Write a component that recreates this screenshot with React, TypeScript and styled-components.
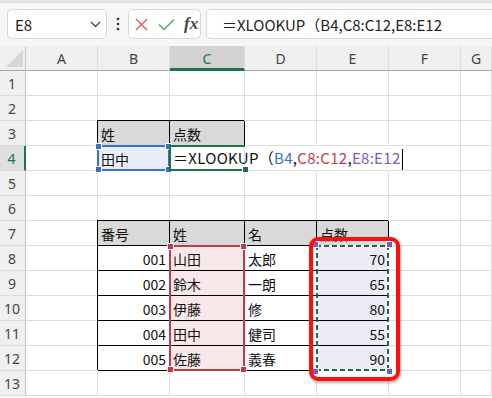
import React, { FC, ReactNode } from 'react';
import styled, { createGlobalStyle, css } from 'styled-components';

const GlobalStyle = createGlobalStyle`
  html, body {
    margin: 0;
    padding: 0;
    background: #fff;
    overflow: hidden;
  }
  body {
    font-family: "Noto Sans CJK JP", "Noto Sans", sans-serif;
  }
`;

const GREEN = '#1f7244';
const GRID = '#dcdcdc';

const Page = styled.div`
  width: 492px;
  height: 398px;
  overflow: hidden;
  display: flex;
  flex-direction: column;
  background: #fff;
`;

/* ---------- formula bar ---------- */

const FormulaBar = styled.div`
  flex: none;
  height: 46px;
  box-sizing: border-box;
  display: flex;
  align-items: flex-start;
  padding: 6px 0 0 7px;
  background: #f6f6f6;
  border-top: 3px solid #e3e3e3;
`;

const Box = styled.div`
  height: 30px;
  box-sizing: border-box;
  display: flex;
  align-items: center;
  background: #fff;
  border: 1px solid #d6d6d6;
  border-radius: 5px;
`;

const NameBox = styled(Box)`
  width: 100px;
  justify-content: space-between;
  padding: 0 5px 0 7px;
  font-size: 15px;
  color: #222;
`;

const Dots = styled.div`
  width: 21px;
  height: 30px;
  display: flex;
  align-items: center;
  justify-content: center;
`;

const FxBox = styled(Box)`
  width: 73px;
  padding-left: 6px;
  gap: 10px;
`;

const FxLabel = styled.span`
  font-family: "Liberation Serif", "DejaVu Serif", serif;
  font-style: italic;
  font-weight: bold;
  font-size: 17px;
  color: #444;
  margin-left: -1px;
`;

const FormulaBox = styled(Box)`
  flex: 1;
  margin: 0 -12px 0 5px;
  padding-left: 15px;
  font-size: 15px;
  color: #222;
  white-space: nowrap;
`;

/* ---------- sheet ---------- */

const Sheet = styled.div`
  flex: 1;
  display: grid;
  grid-template-columns: 26px 72px 72px 75px 72px 72px 72px 1fr;
  grid-template-rows: repeat(15, 25px);
  background: #fff;
  font-family: "Noto Sans", "Open Sans", sans-serif;
`;

const Corner = styled.div`
  grid-row: 1;
  grid-column: 1;
  box-sizing: border-box;
  background: #f0f0f0;
  border-right: 1px solid #c6c6c6;
  border-bottom: 1px solid #a8a8a8;
  display: flex;
  align-items: flex-end;
  justify-content: flex-end;
  padding: 0 2px 3px 0;
`;

const ColHead = styled.div<{ $c: number; $active?: boolean }>`
  grid-row: 1;
  grid-column: ${(p) => p.$c + 1};
  box-sizing: border-box;
  display: flex;
  align-items: center;
  justify-content: center;
  font-size: 14px;
  color: #444;
  background: #f0f0f0;
  border-right: 1px solid ${GRID};
  border-bottom: 1px solid #a8a8a8;
  ${(p) =>
    p.$active &&
    css`
      background: #d3d3d3;
      color: ${GREEN};
      border-bottom: 3px solid ${GREEN};
      padding-top: 2px;
    `}
`;

const RowHead = styled.div<{ $r: number; $active?: boolean }>`
  grid-row: ${(p) => p.$r + 1};
  grid-column: 1;
  box-sizing: border-box;
  display: flex;
  align-items: center;
  justify-content: center;
  padding-right: 1px;
  font-size: 14px;
  color: #444;
  background: #f0f0f0;
  border-right: 1px solid #c6c6c6;
  border-bottom: 1px solid ${GRID};
  ${(p) =>
    p.$active &&
    css`
      background: #dfdfdf;
      color: ${GREEN};
      border-right: 2px solid ${GREEN};
    `}
`;

const Cell = styled.div<{
  $r: number;
  $c: number;
  $head?: boolean;
  $boxed?: boolean;
  $right?: boolean;
  $bg?: string;
  $spill?: boolean;
}>`
  grid-row: ${(p) => p.$r + 1};
  grid-column: ${(p) => p.$c + 1};
  min-width: 0;
  box-sizing: border-box;
  display: flex;
  align-items: center;
  justify-content: ${(p) => (p.$right ? 'flex-end' : 'flex-start')};
  padding: 1px 3px 0 3px;
  font-family: "Noto Sans CJK JP", sans-serif;
  font-size: 14px;
  color: #111;
  white-space: nowrap;
  background: ${(p) => p.$bg ?? 'transparent'};
  border-right: 1px solid ${(p) => (p.$spill ? 'transparent' : GRID)};
  border-bottom: 1px solid ${GRID};
  ${(p) =>
    (p.$boxed || p.$head) &&
    css`
      border-right-color: #000;
      border-bottom-color: #000;
      box-shadow: -1px -1px 0 #000;
    `}
  ${(p) =>
    p.$head &&
    css`
      background: #d9d9d9;
    `}
`;

const FormulaText = styled.span`
  font-size: 15px;
  letter-spacing: 0.3px;
`;

const Tok = styled.span<{ $color?: string }>`
  color: ${(p) => p.$color ?? '#111'};
`;

const Caret = styled.span`
  display: inline-block;
  width: 1px;
  height: 21px;
  margin-left: 1px;
  background: #000;
  vertical-align: middle;
`;

/* ---------- overlays on the grid ---------- */

const Overlay = styled.div<{ $r: number; $c: number; $span?: number }>`
  grid-row: ${(p) => p.$r + 1} / span ${(p) => p.$span ?? 1};
  grid-column: ${(p) => p.$c + 1};
  position: relative;
  z-index: 2;
  pointer-events: none;
  box-sizing: border-box;
  margin: -1px 0 0 -1px;
`;

const RangeBox = styled(Overlay)<{ $color: string }>`
  border: 2px solid ${(p) => p.$color};
`;

const ActiveBox = styled(Overlay)`
  border-top: 2px solid ${GREEN};
  border-left: 2px solid ${GREEN};
  border-bottom: 2px solid ${GREEN};
`;

const dash = (dir: string) =>
  `repeating-linear-gradient(${dir}, #1e6a3f 0 5px, #fff 5px 8px)`;

const CopyBox = styled(Overlay)`
  background: ${dash('90deg')} top / 100% 2px no-repeat,
    ${dash('90deg')} bottom / 100% 2px no-repeat,
    ${dash('180deg')} left / 2px 100% no-repeat,
    ${dash('180deg')} right / 2px 100% no-repeat;
`;

const Callout = styled(Overlay)`
  z-index: 3;
  margin: -9px -11px -10px -8px;
  border: 4px solid #ff0e0e;
  border-radius: 9px;
  box-shadow: 1px 2px 3px rgba(0, 0, 0, 0.3);
`;

type CornerPos = 'tl' | 'tr' | 'bl' | 'br';

const Handle = styled.span<{ $color: string; $at: CornerPos }>`
  position: absolute;
  width: 7px;
  height: 7px;
  box-sizing: border-box;
  background: ${(p) => p.$color};
  border: 1px solid #fff;
  ${(p) => (p.$at[0] === 't' ? 'top: -4px;' : 'bottom: -4px;')}
  ${(p) => (p.$at[1] === 'l' ? 'left: -4px;' : 'right: -4px;')}
`;

const Handles: FC<{ color: string; corners?: CornerPos[] }> = ({
  color,
  corners = ['tl', 'tr', 'bl', 'br'],
}) => (
  <>
    {corners.map((c) => (
      <Handle key={c} $color={color} $at={c} />
    ))}
  </>
);

/* ---------- data ---------- */

// sheet columns are numbered A=1, B=2 ...; grid column = sheet column + 1
const COLS = ['A', 'B', 'C', 'D', 'E', 'F', 'G'];
const ROWS = Array.from({ length: 13 }, (_, i) => i + 1);

const PEOPLE = [
  ['001', '山田', '太郎', '70'],
  ['002', '鈴木', '一朗', '65'],
  ['003', '伊藤', '修', '80'],
  ['004', '田中', '健司', '55'],
  ['005', '佐藤', '義春', '90'],
];

const BLUE = '#3c6fc7';
const RED = '#c3394a';
const PURPLE = '#7d5bbd';

const Formula: FC = () => (
  <FormulaText>
    <Tok>＝XLOOKUP（</Tok>
    <Tok $color={BLUE}>B4</Tok>
    <Tok>,</Tok>
    <Tok $color={RED}>C8:C12</Tok>
    <Tok>,</Tok>
    <Tok $color={PURPLE}>E8:E12</Tok>
    <Caret />
  </FormulaText>
);

type CellDef = {
  v?: ReactNode;
  head?: boolean;
  boxed?: boolean;
  right?: boolean;
  bg?: string;
  spill?: boolean;
};

const cells: Record<string, CellDef> = {
  B3: { v: '姓', head: true },
  C3: { v: '点数', head: true },
  B4: { v: '田中', bg: '#e9eef8' },
  C4: { v: <Formula /> },
  D4: { spill: true },
  E4: { spill: true },
  B7: { v: '番号', head: true },
  C7: { v: '姓', head: true },
  D7: { v: '名', head: true },
  E7: { v: '点数', head: true },
};

PEOPLE.forEach(([no, last, first, score], i) => {
  const r = 8 + i;
  cells[`B${r}`] = { v: no, boxed: true, right: true };
  cells[`C${r}`] = { v: last, boxed: true, bg: '#f9e8e9' };
  cells[`D${r}`] = { v: first, boxed: true };
  cells[`E${r}`] = { v: score, boxed: true, right: true, bg: '#edebf6' };
});

/* ---------- icons ---------- */

const Chevron = () => (
  <svg width="11" height="7" viewBox="0 0 11 7">
    <polyline points="1,1 5.5,5.5 10,1" fill="none" stroke="#444" strokeWidth="1.3" />
  </svg>
);

const VDots = () => (
  <svg width="4" height="14" viewBox="0 0 4 14">
    <circle cx="2" cy="2" r="1.3" fill="#333" />
    <circle cx="2" cy="7" r="1.3" fill="#333" />
    <circle cx="2" cy="12" r="1.3" fill="#333" />
  </svg>
);

const Cross = () => (
  <svg width="13" height="13" viewBox="0 0 13 13">
    <path d="M1 1L12 12M12 1L1 12" stroke="#e06464" strokeWidth="1.5" fill="none" />
  </svg>
);

const Check = () => (
  <svg width="17" height="13" viewBox="0 0 17 13">
    <polyline points="1,6.5 6,11.5 16,1.5" fill="none" stroke="#5fb35f" strokeWidth="1.6" />
  </svg>
);

const CornerTriangle = () => (
  <svg width="17" height="17" viewBox="0 0 17 17">
    <polygon points="17,0 17,17 0,17" fill="#d6d6d6" />
  </svg>
);

/* ---------- page ---------- */

export default function App() {
  return (
    <Page>
      <GlobalStyle />
      <FormulaBar>
        <NameBox>
          <span>E8</span>
          <Chevron />
        </NameBox>
        <Dots>
          <VDots />
        </Dots>
        <FxBox>
          <Cross />
          <Check />
          <FxLabel>fx</FxLabel>
        </FxBox>
        <FormulaBox>＝XLOOKUP（B4,C8:C12,E8:E12</FormulaBox>
      </FormulaBar>

      <Sheet>
        <Corner>
          <CornerTriangle />
        </Corner>
        {COLS.map((name, i) => (
          <ColHead key={name} $c={i + 1} $active={name === 'C'}>
            {name}
          </ColHead>
        ))}
        {ROWS.map((r) => (
          <RowHead key={r} $r={r} $active={r === 4}>
            {r}
          </RowHead>
        ))}
        {ROWS.map((r) =>
          COLS.map((name, ci) => {
            const d = cells[`${name}${r}`] ?? {};
            return (
              <Cell
                key={`${name}${r}`}
                $r={r}
                $c={ci + 1}
                $head={d.head}
                $boxed={d.boxed}
                $right={d.right}
                $bg={d.bg}
                $spill={d.spill}
              >
                {d.v}
              </Cell>
            );
          })
        )}

        <RangeBox $r={4} $c={2} $color={BLUE}>
          <Handles color={BLUE} />
        </RangeBox>
        <ActiveBox $r={4} $c={3}>
          <Handles color={GREEN} corners={['br']} />
        </ActiveBox>
        <RangeBox $r={8} $c={3} $span={5} $color={RED}>
          <Handles color={RED} />
        </RangeBox>
        <CopyBox $r={8} $c={5} $span={5}>
          <Handles color={PURPLE} />
        </CopyBox>
        <Callout $r={8} $c={5} $span={5} />
      </Sheet>
    </Page>
  );
}
